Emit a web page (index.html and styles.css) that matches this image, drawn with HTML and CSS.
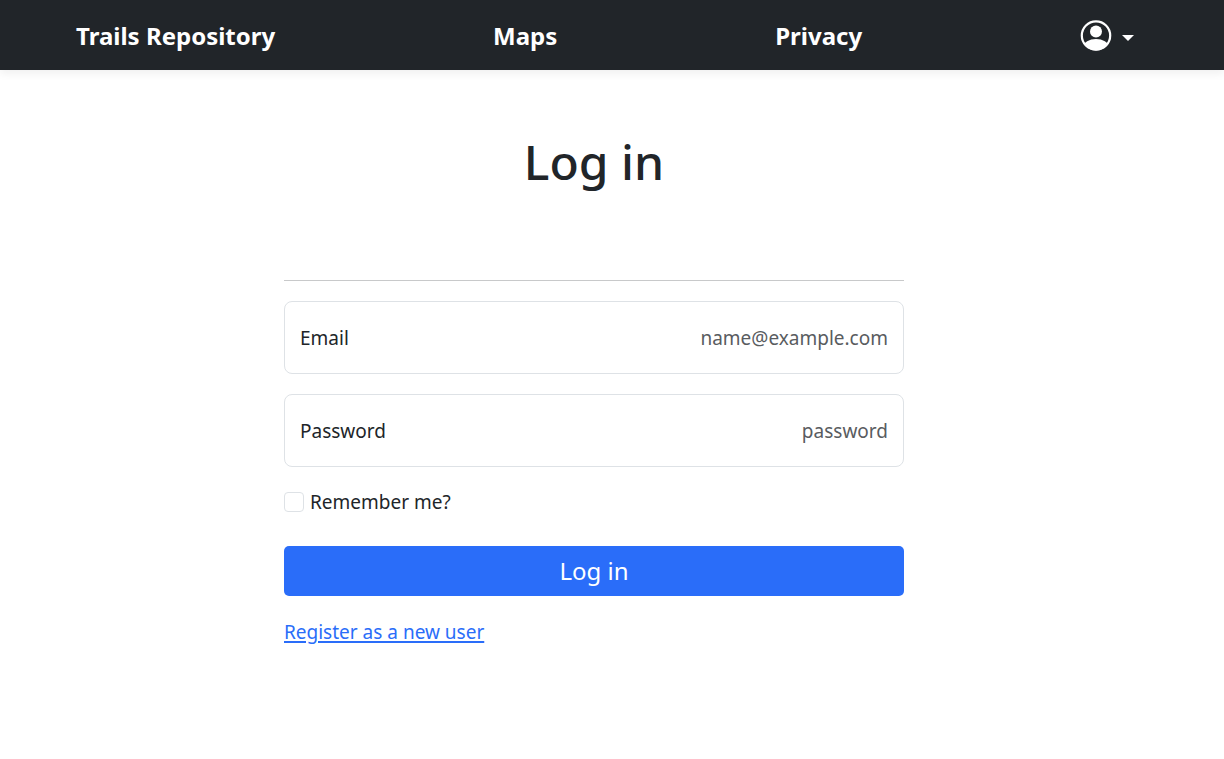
FILE: index.html
```html
<!DOCTYPE html>
<html lang="en">
<head>
<meta charset="utf-8">
<meta name="viewport" content="width=device-width, initial-scale=1">
<title>Log in - Trails Repository</title>
<link rel="stylesheet" href="styles.css">
</head>
<body>
<header class="site-header">
  <nav class="nav">
    <a class="nav-link" href="#">Trails Repository</a>
    <a class="nav-link" href="#">Maps</a>
    <a class="nav-link" href="#">Privacy</a>
    <button class="account" type="button" aria-label="Account">
      <svg class="account-icon" viewBox="0 0 32 32" aria-hidden="true">
        <defs><clipPath id="disc"><circle cx="16" cy="15.5" r="15"/></clipPath></defs>
        <circle cx="16" cy="15.5" r="14.2" fill="none" stroke="currentColor" stroke-width="2.2"/>
        <circle cx="16" cy="11.5" r="6" fill="currentColor"/>
        <ellipse cx="16" cy="27" rx="12.5" ry="8" fill="currentColor" clip-path="url(#disc)"/>
      </svg>
      <span class="caret"></span>
    </button>
  </nav>
</header>
<main class="page">
  <h1 class="title">Log in</h1>
  <form class="login">
    <hr class="rule">
    <div class="field">
      <label class="field-label" for="email">Email</label>
      <input class="field-input" id="email" type="email" placeholder="name@example.com">
    </div>
    <div class="field">
      <label class="field-label" for="password">Password</label>
      <input class="field-input" id="password" type="password" placeholder="password">
    </div>
    <div class="remember">
      <input class="check" id="remember" type="checkbox">
      <label for="remember">Remember me?</label>
    </div>
    <button class="submit" type="submit">Log in</button>
    <a class="register" href="#">Register as a new user</a>
  </form>
</main>
</body>
</html>
```

FILE: styles.css
```css
* {
  box-sizing: border-box;
}

body {
  margin: 0;
  background: #fff;
  color: #212529;
  font-family: "Segoe UI", "Noto Sans", sans-serif;
  font-size: 19px;
  line-height: 30px;
}

.site-header {
  background: #212529;
  box-shadow: 0 4px 8px rgba(0, 0, 0, 0.06);
}

.nav {
  display: flex;
  align-items: center;
  justify-content: space-between;
  padding: 17px 90px 15px 76px;
}

.nav-link {
  color: #fff;
  font-size: 24px;
  font-weight: 700;
  line-height: 38px;
  text-decoration: none;
}

.account {
  display: flex;
  align-items: center;
  gap: 10px;
  padding: 0;
  border: 0;
  background: none;
  color: #fff;
}

.account-icon {
  width: 32px;
  height: 32px;
}

.caret {
  border: 6px solid transparent;
  border-top-color: currentColor;
  border-bottom: 0;
  margin-top: 4px;
}

.page {
  padding: 62px 36px 60px 0;
}

.title {
  margin: 0 0 88px;
  font-size: 48px;
  font-weight: 500;
  line-height: 60px;
  text-align: center;
}

.login {
  max-width: 620px;
  margin: 0 auto;
}

.rule {
  margin: 0 0 20px;
  border: 0;
  border-top: 1px solid #c8c9ca;
}

.field {
  display: flex;
  align-items: center;
  margin-bottom: 20px;
  padding: 0 15px;
  border: 1px solid #dee2e6;
  border-radius: 8px;
}

.field-input {
  flex: 1;
  min-width: 0;
  height: 71px;
  padding: 0;
  border: 0;
  outline: 0;
  background: none;
  color: inherit;
  font: inherit;
  text-align: right;
}

.field-input::placeholder {
  color: #595c5f;
  opacity: 1;
}

.remember {
  display: flex;
  align-items: center;
  gap: 6px;
  margin-bottom: 29px;
}

.check {
  appearance: none;
  width: 20px;
  height: 20px;
  margin: 0;
  border: 1px solid #dee2e6;
  border-radius: 4px;
  background: #fff;
}

.check:checked {
  background: #2a6df9;
}

.submit {
  display: block;
  width: 100%;
  margin-bottom: 21px;
  padding: 10px;
  border: 0;
  border-radius: 5px;
  background: #2a6df9;
  color: #fff;
  font: inherit;
  font-size: 24px;
  line-height: 30px;
}

.register {
  color: #2a6df9;
  text-decoration-thickness: 2px;
  text-underline-offset: 2px;
}
```
